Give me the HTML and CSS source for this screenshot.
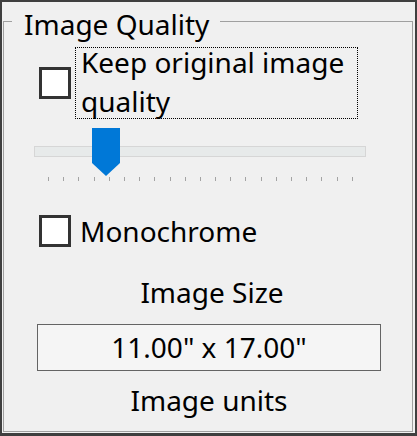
FILE: index.html
```html
<!DOCTYPE html>
<html>
<head>
<meta charset="utf-8">
<title>Image Quality</title>
<link rel="stylesheet" href="styles.css">
</head>
<body>
<div class="window">
  <div class="group">
    <span class="legend">Image Quality</span>
    <div class="check-row keep">
      <span class="box"></span>
      <span class="focus"><span class="focus-text">Keep original image quality</span></span>
    </div>
    <div class="slider">
      <div class="track"></div>
      <svg class="thumb" width="28" height="48" viewBox="0 0 28 48"><path d="M0 0H28V35L14 48L0 35Z" fill="#0078d7"/></svg>
      <div class="ticks">
        <span></span><span></span><span></span><span></span><span></span><span></span><span></span>
        <span></span><span></span><span></span><span></span><span></span><span></span><span></span>
        <span></span><span></span><span></span><span></span><span></span><span></span><span></span>
      </div>
    </div>
    <div class="check-row mono">
      <span class="box"></span>
      <span class="label">Monochrome</span>
    </div>
    <div class="caption size-cap">Image Size</div>
    <div class="value">11.00" x 17.00"</div>
    <div class="caption units-cap">Image units</div>
  </div>
</div>
</body>
</html>
```

FILE: styles.css
```css
html, body {
  margin: 0;
  padding: 0;
}
body {
  width: 417px;
  height: 436px;
  font-family: "Noto Sans", "Open Sans", sans-serif;
  font-size: 28px;
  color: #000;
  background: #f0f0f0;
}
.window {
  box-sizing: border-box;
  width: 417px;
  height: 436px;
  border: 2px solid #3f3f3f;
  border-bottom-width: 3px;
  background: #f0f0f0;
  padding: 19px 2px 1px 1px;
  display: flex;
  flex-direction: column;
}
.group {
  flex: 1;
  position: relative;
  border: 1px solid #a0a0a0;
}
.legend {
  position: absolute;
  left: 8px;
  top: -17px;
  padding: 0 11px 0 12px;
  line-height: 38px;
  background: #f0f0f0;
  white-space: nowrap;
}
.check-row {
  display: flex;
  align-items: center;
  margin-left: 35px;
}
.keep {
  margin-top: 25px;
}
.box {
  box-sizing: border-box;
  width: 32px;
  height: 32px;
  border: 3px solid #333333;
  background: #ffffff;
  flex: none;
}
.focus {
  box-sizing: border-box;
  margin-left: 4px;
  width: 283px;
  height: 72px;
  border: 1px dotted #000;
}
.focus-text {
  display: block;
  margin-top: -5px;
  padding-left: 5px;
  line-height: 39px;
}
.slider {
  position: relative;
  margin: 9px 0 0 30px;
  padding-top: 18px;
  width: 332px;
}
.track {
  box-sizing: border-box;
  height: 11px;
  border: 1px solid #d6d6d6;
  background: #e7eaea;
}
.thumb {
  position: absolute;
  left: 58px;
  top: 0;
  display: block;
}
.ticks {
  display: flex;
  justify-content: space-between;
  margin-top: 20px;
  padding: 0 13px 0 14px;
  height: 4px;
}
.ticks span {
  width: 1px;
  height: 4px;
  background: #a3a3a3;
}
.mono {
  margin-top: 34px;
}
.label {
  margin-left: 9px;
  line-height: 32px;
  white-space: nowrap;
}
.caption {
  margin-left: 33px;
  width: 344px;
  text-align: center;
  line-height: 38px;
  white-space: nowrap;
}
.size-cap {
  margin-top: 26px;
  box-sizing: border-box;
  padding-left: 6px;
}
.value {
  box-sizing: border-box;
  margin: 13px 0 0 33px;
  width: 344px;
  height: 47px;
  border: 1px solid #646464;
  background: #f5f5f5;
  text-align: center;
  line-height: 45px;
  white-space: nowrap;
}
.units-cap {
  margin-top: 10px;
}
```
